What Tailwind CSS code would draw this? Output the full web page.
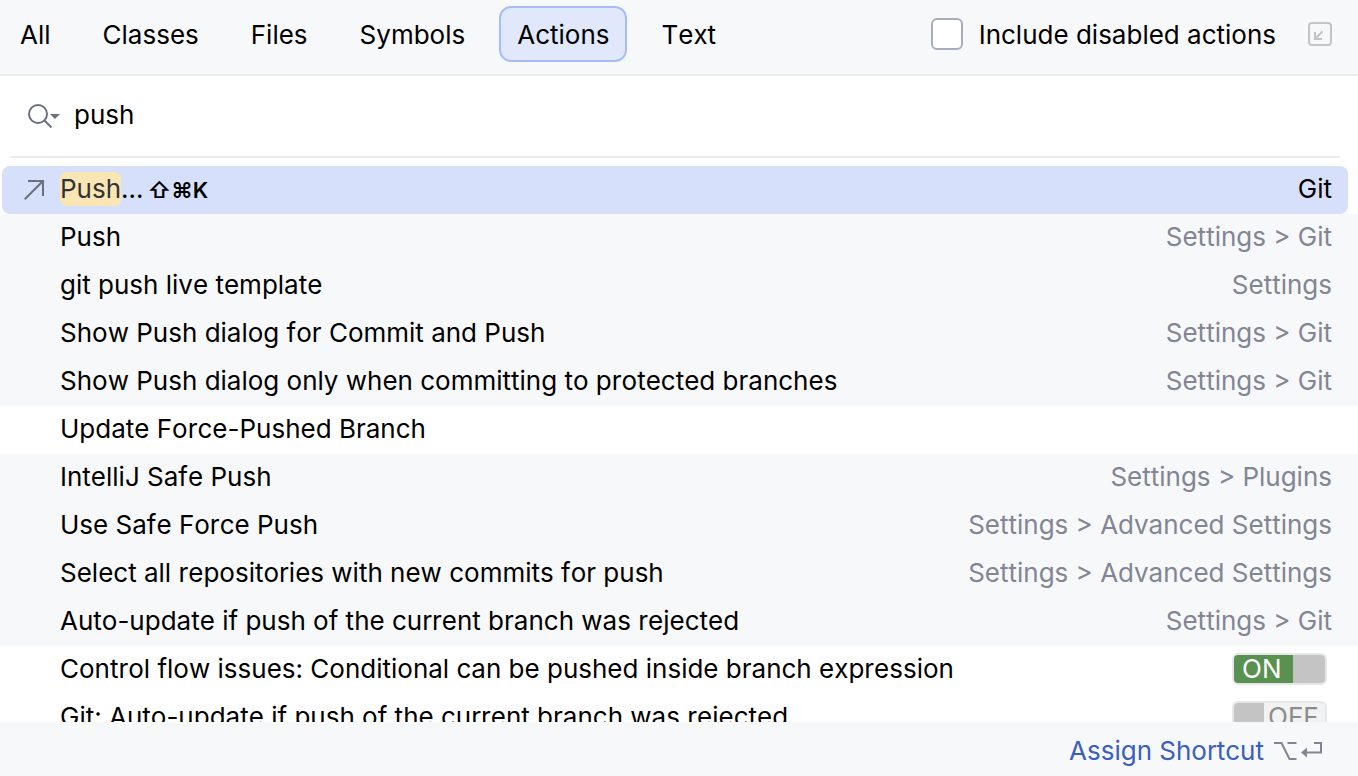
<!DOCTYPE html>
<html lang="en">
<head>
    <meta charset="UTF-8">
    <meta name="viewport" content="width=device-width, initial-scale=1.0">
    <title>Search Everywhere</title>
    <script src="https://cdn.jsdelivr.net/npm/@tailwindcss/browser@4"></script>
</head>
<body class="h-screen flex flex-col overflow-hidden bg-white text-black font-['Inter',sans-serif] [font-kerning:none] text-[26px] leading-8">

    <!-- Tabs -->
    <header class="flex items-center justify-between bg-[#f7f8fa] border-b-2 border-[#ebecf0] pt-1.5 pb-3 pl-0.5 pr-[26px]">
        <nav class="flex gap-4">
            <button class="h-14 px-4 pt-0.5 border-2 border-transparent rounded-xl">All</button>
            <button class="h-14 px-4 pt-0.5 border-2 border-transparent rounded-xl">Classes</button>
            <button class="h-14 px-4 pt-0.5 border-2 border-transparent rounded-xl">Files</button>
            <button class="h-14 px-4 pt-0.5 border-2 border-transparent rounded-xl">Symbols</button>
            <button class="h-14 px-4 pt-0.5 border-2 border-[#a6bdf5] rounded-xl bg-[#e2e8fb]">Actions</button>
            <button class="h-14 px-4 pt-0.5 border-2 border-transparent rounded-xl">Text</button>
        </nav>
        <div class="flex items-center gap-8">
            <label class="flex items-center gap-4">
                <input type="checkbox" class="appearance-none size-8 rounded-md border-2 border-[#a8adbd] bg-white checked:bg-[#3574f0]">
                <span class="pt-0.5">Include disabled actions</span>
            </label>
            <button aria-label="Open in tool window">
                <svg class="block size-6" viewBox="0 0 24 24" fill="none" stroke="#c4c4c4" stroke-width="2">
                    <rect x="1" y="1" width="22" height="22" rx="3"/>
                    <path d="M14.5 9.5L7.5 16.5M7 10v7h7"/>
                </svg>
            </button>
        </div>
    </header>

    <!-- Search field -->
    <div class="flex items-center gap-3.5 h-20 pl-7">
        <button aria-label="Search history">
            <svg class="block w-8 h-6" viewBox="0 0 32 24" fill="none" stroke="#6c707e" stroke-width="2">
                <circle cx="10" cy="10" r="9"/>
                <path d="M16.5 16.5L23.5 23.5"/>
                <path d="M22 10h10l-5 5z" fill="#6c707e" stroke="none"/>
            </svg>
        </button>
        <input type="text" value="push" aria-label="Search" class="flex-1 h-10 pb-1 outline-none">
    </div>
    <hr class="ml-2.5 mr-4.5 border-t-2 border-[#ebecf0] mb-2">

    <!-- Results -->
    <ul class="flex-1 min-h-0 overflow-hidden">
        <li class="flex items-center h-12 ml-0.5 mr-2.5 pl-5.5 pr-4 pb-0.5 rounded-lg bg-[#d7e0fb]">
            <svg class="block size-5 mr-4 mt-0.5" viewBox="0 0 20 20" fill="none" stroke="#6c707e" stroke-width="2">
                <path d="M0.7 19.3L19 1M4 1h15v15"/>
            </svg>
            <span class="rounded-md bg-[#fae6b4] text-[#333333] leading-[34px]">Push</span>
            <span>…</span>
            <kbd class="ml-1 mt-0.5 font-['Inter',sans-serif] text-[22px] font-semibold">⇧⌘K</kbd>
            <span class="ml-auto">Git</span>
        </li>
        <li class="flex items-center justify-between h-12 pl-15 pr-6.5 pb-0.5 bg-[#f7f8fa]">
            <span>Push</span>
            <span class="text-[#818594]">Settings &gt; Git</span>
        </li>
        <li class="flex items-center justify-between h-12 pl-15 pr-6.5 pb-0.5 bg-[#f7f8fa]">
            <span>git push live template</span>
            <span class="text-[#818594]">Settings</span>
        </li>
        <li class="flex items-center justify-between h-12 pl-15 pr-6.5 pb-0.5 bg-[#f7f8fa]">
            <span>Show Push dialog for Commit and Push</span>
            <span class="text-[#818594]">Settings &gt; Git</span>
        </li>
        <li class="flex items-center justify-between h-12 pl-15 pr-6.5 pb-0.5 bg-[#f7f8fa]">
            <span>Show Push dialog only when committing to protected branches</span>
            <span class="text-[#818594]">Settings &gt; Git</span>
        </li>
        <li class="flex items-center h-12 pl-15 pr-6.5 pb-0.5">
            <span>Update Force-Pushed Branch</span>
        </li>
        <li class="flex items-center justify-between h-12 pl-15 pr-6.5 pb-0.5 bg-[#f7f8fa]">
            <span>IntelliJ Safe Push</span>
            <span class="text-[#818594]">Settings &gt; Plugins</span>
        </li>
        <li class="flex items-center justify-between h-12 pl-15 pr-6.5 pb-0.5 bg-[#f7f8fa]">
            <span>Use Safe Force Push</span>
            <span class="text-[#818594]">Settings &gt; Advanced Settings</span>
        </li>
        <li class="flex items-center justify-between h-12 pl-15 pr-6.5 pb-0.5 bg-[#f7f8fa]">
            <span>Select all repositories with new commits for push</span>
            <span class="text-[#818594]">Settings &gt; Advanced Settings</span>
        </li>
        <li class="flex items-center justify-between h-12 pl-15 pr-6.5 pb-0.5 bg-[#f7f8fa]">
            <span>Auto-update if push of the current branch was rejected</span>
            <span class="text-[#818594]">Settings &gt; Git</span>
        </li>
        <li>
            <label class="flex items-center justify-between h-12 pl-15 pr-[31px] pb-0.5">
                <span>Control flow issues: Conditional can be pushed inside branch expression</span>
                <input type="checkbox" role="switch" checked class="sr-only">
                <span class="flex w-[95px] h-8 rounded-md border-2 border-[#e6e7ea] overflow-hidden leading-7">
                    <span class="flex-1 pl-2 bg-[#599150] text-white">ON</span>
                    <span class="w-8 bg-[#c4c4c4]"></span>
                </span>
            </label>
        </li>
        <li>
            <label class="flex items-center justify-between h-12 pl-15 pr-[31px] pb-0.5">
                <span>Git: Auto-update if push of the current branch was rejected</span>
                <input type="checkbox" role="switch" class="sr-only">
                <span class="flex w-[95px] h-8 rounded-md border-2 border-[#e6e7ea] overflow-hidden leading-7">
                    <span class="w-[30px] bg-[#c4c4c4]"></span>
                    <span class="flex-1 pl-1 bg-[#f2f2f2] text-[#8c8c8c]">OFF</span>
                </span>
            </label>
        </li>
    </ul>

    <!-- Footer -->
    <footer class="flex items-center justify-end gap-2.5 h-[54px] pr-9 pt-1 bg-[#f7f8fa]">
        <a href="#" class="text-[#3a5fbe]">Assign Shortcut</a>
        <svg class="block w-12 h-5" viewBox="0 0 48 20" fill="none" stroke="#818594" stroke-width="2" role="img" aria-label="Option Enter">
            <path d="M0 2h7.500l8 16h7M13.500 2h9"/>
            <path d="M40 2h7v9.500H33"/>
            <path d="M27 11.500l6-5v10z" fill="#818594" stroke="none"/>
        </svg>
    </footer>

</body>
</html>
